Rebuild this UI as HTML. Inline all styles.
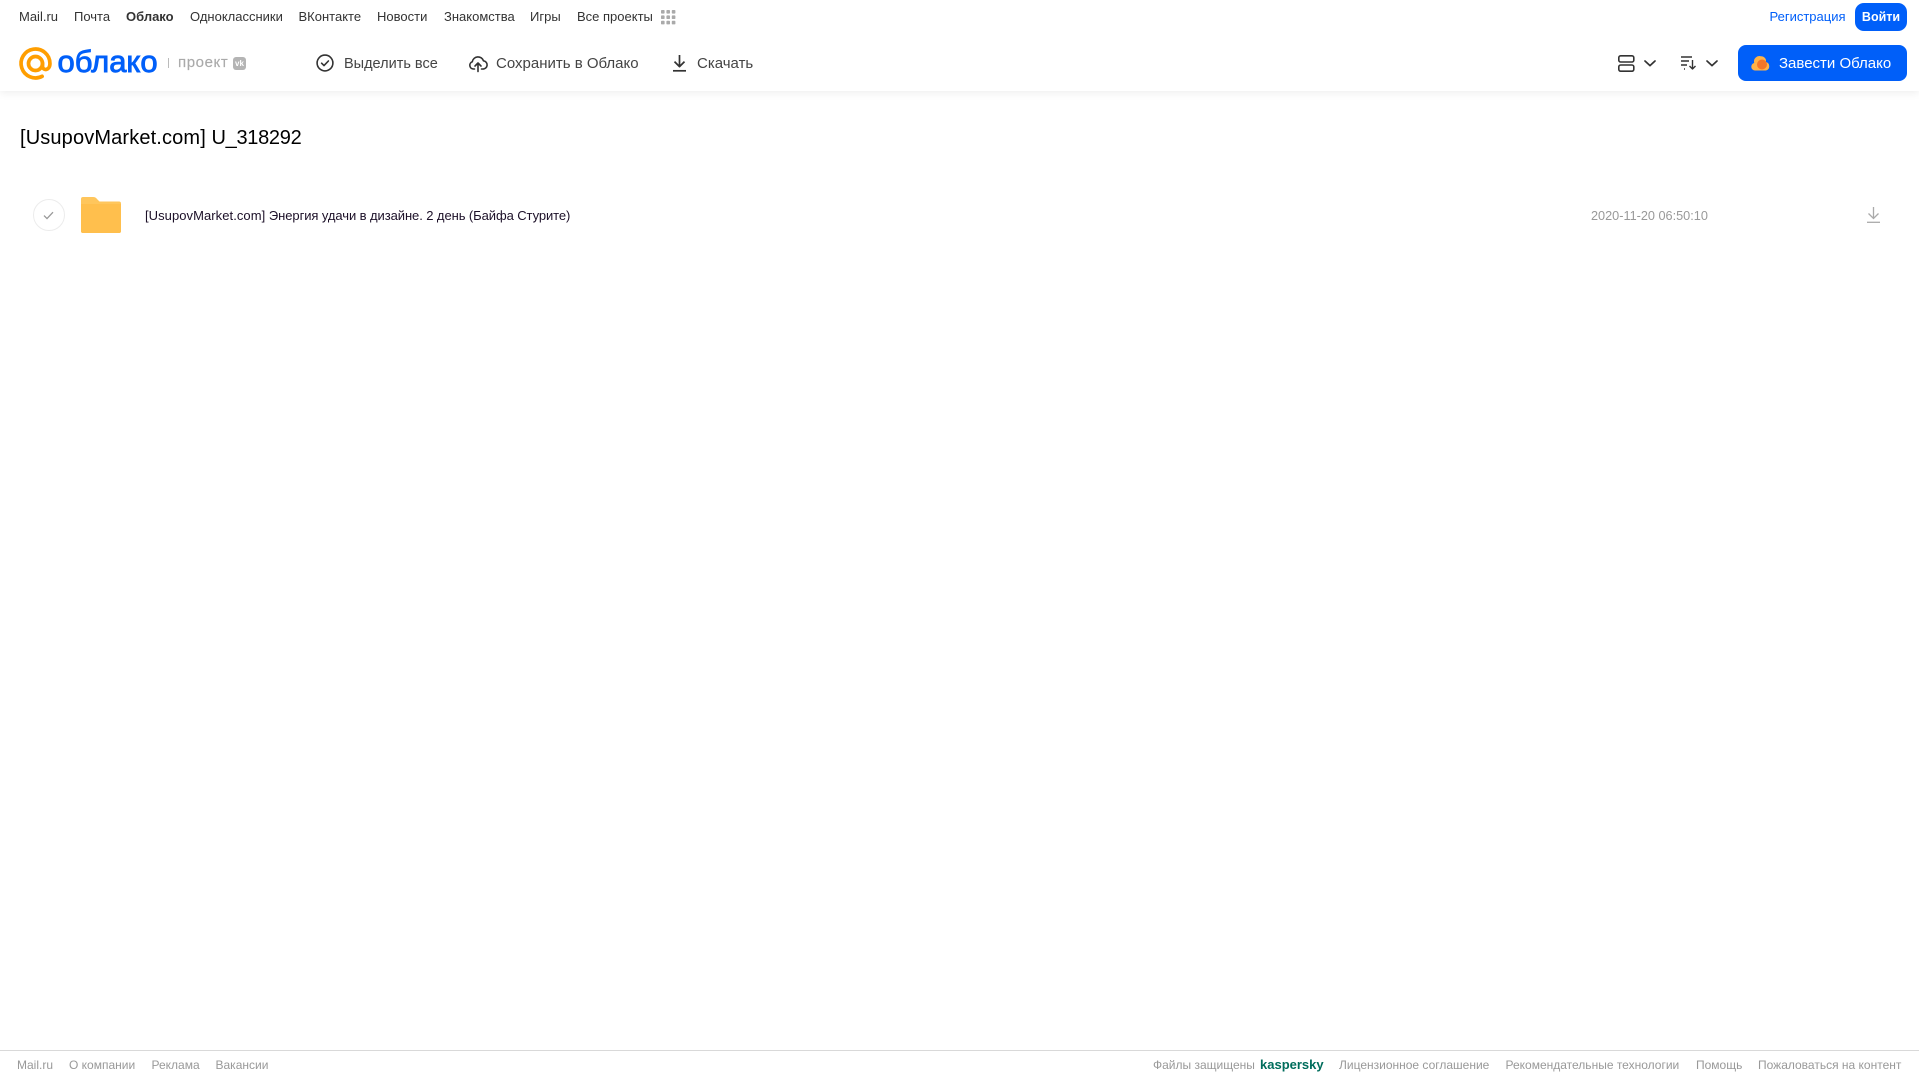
<!DOCTYPE html>
<html lang="ru"><head><meta charset="utf-8"><title>Облако</title>
<style>
html,body{margin:0;padding:0;background:#fff}
body{width:1919px;height:1079px;position:relative;overflow:hidden;font-family:"Liberation Sans",Arial,sans-serif}
a,span.t{position:absolute;white-space:nowrap;text-decoration:none}
svg{position:absolute;display:block;overflow:visible}
.head{position:absolute;left:0;top:0;width:1919px;height:91px;background:#fff;box-shadow:0 2px 8px rgba(0,0,0,.07)}
.n{top:9px;font-size:13px;line-height:15px;color:#333}
.b{top:55px;font-size:15px;line-height:18px;color:#444}
.f{top:1058px;font-size:12px;line-height:14px;color:#999}
</style></head><body>
<div class="head">
<a class="n" style="left:19px">Mail.ru</a>
<a class="n" style="left:74px">Почта</a>
<a class="n" style="left:126px;font-weight:bold">Облако</a>
<a class="n" style="left:190px">Одноклассники</a>
<a class="n" style="left:298.5px">ВКонтакте</a>
<a class="n" style="left:377px">Новости</a>
<a class="n" style="left:444px">Знакомства</a>
<a class="n" style="left:530px">Игры</a>
<a class="n" style="left:577px">Все проекты</a>
<svg style="left:661px;top:10px" width="15" height="15" fill="#aaa"><rect width="3.6" height="3.6" rx=".8"/><rect x="5.4" width="3.6" height="3.6" rx=".8"/><rect x="10.8" width="3.6" height="3.6" rx=".8"/><rect y="5.4" width="3.6" height="3.6" rx=".8"/><rect x="5.4" y="5.4" width="3.6" height="3.6" rx=".8"/><rect x="10.8" y="5.4" width="3.6" height="3.6" rx=".8"/><rect y="10.8" width="3.6" height="3.6" rx=".8"/><rect x="5.4" y="10.8" width="3.6" height="3.6" rx=".8"/><rect x="10.8" y="10.8" width="3.6" height="3.6" rx=".8"/></svg>
<a class="n" style="left:1769.5px;color:#005ff9">Регистрация</a>
<a class="n" style="left:1855px;top:3px;width:52px;height:28px;line-height:28px;background:#005ff9;color:#fff;border-radius:9px;text-align:center;font-weight:bold;font-size:12.5px">Войти</a>

<svg style="left:19px;top:47px" width="33" height="33" viewBox="0 0 32 32" fill="none" stroke="#ff9e00" stroke-width="3.6"><circle cx="16" cy="16" r="6.8"/><path d="M22.8 16v2.6c0 4.6 7.2 4.6 7.2-2.6A14 14 0 1 0 22.4 28.400" stroke-linecap="round"/></svg>
<span class="t" style="left:57.5px;top:44px;font-size:31px;line-height:36px;color:#005ff9;-webkit-text-stroke:.9px #005ff9">облако</span>
<div style="position:absolute;left:168px;top:58px;width:1px;height:10px;background:#bbb"></div>
<span class="t" style="left:178px;top:54px;font-size:15px;line-height:18px;color:#aaa;-webkit-text-stroke:.15px #aaa;letter-spacing:.6px">проект</span>
<span class="t" style="left:233px;top:57px;width:13px;height:13px;border-radius:3px;background:#b4b4b4;color:#fff;font-size:8px;line-height:13px;text-align:center;font-weight:bold">vk</span>

<svg style="left:316px;top:54px" width="18" height="18" viewBox="0 0 18 18" fill="none" stroke="#333" stroke-width="1.6"><circle cx="9" cy="9" r="7.9"/><path d="M5.6 9.2l2.4 2.4 4.4-4.6" stroke-linecap="round" stroke-linejoin="round"/></svg>
<a class="b" style="left:344px;font-size:14.5px">Выделить все</a>
<svg style="left:469px;top:54px" width="18" height="18" viewBox="0 0 18 18" fill="none" stroke="#333" stroke-width="1.6" stroke-linecap="round" stroke-linejoin="round"><path d="M5.500 15H4.500A3.700 3.700 0 0 1 3.300 7.800 5.800 5.800 0 0 1 14.500 6.800 4.100 4.100 0 0 1 13.500 15H12.500"/><path d="M9 17.500V9.500M6 12l3-3 3 3"/></svg>
<a class="b" style="left:496px">Сохранить в Облако</a>
<svg style="left:672px;top:54px" width="15" height="18" viewBox="0 0 15 18" fill="none" stroke="#333" stroke-width="1.7"><path d="M7.500 1v11M2.500 7.600l5 5 5-5" stroke-linejoin="round"/><path d="M1 16.800h13"/></svg>
<a class="b" style="left:697px">Скачать</a>

<svg style="left:1618px;top:55px" width="17" height="17" viewBox="0 0 17 17" fill="none" stroke="#333" stroke-width="1.6"><rect x=".8" y=".8" width="15" height="6.2" rx="1.8"/><rect x=".8" y="10" width="15" height="6.2" rx="1.8"/></svg>
<svg style="left:1644px;top:60px" width="12" height="7" viewBox="0 0 12 7" fill="none" stroke="#333" stroke-width="1.7" stroke-linecap="round" stroke-linejoin="round"><path d="M1 1l5 4.600L11 1"/></svg>
<svg style="left:1681px;top:56px" width="16" height="14" viewBox="0 0 16 14" fill="none" stroke="#333" stroke-width="1.4"><path d="M0 1h11M0 5h8M0 9h6M3 13h1"/><path d="M11.500 4v9M8.500 10l3 3 3-3" stroke-linejoin="round"/></svg>
<svg style="left:1706px;top:60px" width="12" height="7" viewBox="0 0 12 7" fill="none" stroke="#333" stroke-width="1.7" stroke-linecap="round" stroke-linejoin="round"><path d="M1 1l5 4.600L11 1"/></svg>

<div style="position:absolute;left:1738px;top:45px;width:169px;height:36px;background:#005ff9;border-radius:8px"></div>
<svg style="left:1751px;top:54px" width="19" height="17" viewBox="0 0 19 17"><path d="M4 16.500A3.800 3.800 0 0 1 3.200 9 5.500 5.500 0 0 1 10 2.200 5 5 0 0 1 15 8a4.400 4.400 0 0 1 0 8.500z" fill="#ffb347"/><circle cx="11" cy="10.500" r="5" fill="#f4762a"/></svg>
<a class="b" style="left:1779px;color:#fff">Завести Облако</a>
</div>

<span class="t" style="left:20px;top:126px;font-size:20px;line-height:24px;color:#000"><span style="letter-spacing:.14px">[UsupovMarket.com]</span> <span style="letter-spacing:-.3px">U_318292</span></span>

<div style="position:absolute;left:33px;top:199px;width:30px;height:30px;border:1px solid #ececec;border-radius:50%"></div>
<svg style="left:43px;top:211px" width="11" height="9" viewBox="0 0 11 9" fill="none" stroke="#999" stroke-width="1.3"><path d="M1 4.600l3 3 6-6.400"/></svg>
<svg style="left:81px;top:197px" width="40" height="36" viewBox="0 0 40 36"><path d="M2 0h10c2 0 3 .8 4 2l2.500 2.500H38a2 2 0 0 1 2 2V34a2 2 0 0 1-2 2H2a2 2 0 0 1-2-2V2a2 2 0 0 1 2-2z" fill="#ffc65c"/><path d="M0 7h40v27a2 2 0 0 1-2 2H2a2 2 0 0 1-2-2z" fill="#ffbf4d"/></svg>
<span class="t" style="left:145px;top:208px;font-size:13px;line-height:15px;color:#1c1028"><span style="letter-spacing:.06px">[UsupovMarket.com]</span> <span style="letter-spacing:-.08px">Энергия удачи в дизайне. 2 день (Байфа Стурите)</span></span>
<span class="t" style="left:1591px;top:208px;font-size:12.7px;line-height:16px;color:#999">2020-11-20 06:50:10</span>
<svg style="left:1867px;top:207px" width="13" height="16" viewBox="0 0 13 16" fill="none" stroke="#aaa" stroke-width="1.3"><path d="M6.500 0v11M1.500 6.500l5 5 5-5"/><path d="M0 15.300h13"/></svg>

<div style="position:absolute;left:0;top:1050px;width:1919px;height:1px;background:#d9d9d9"></div>
<a class="f" style="left:17px">Mail.ru</a>
<a class="f" style="left:69px">О компании</a>
<a class="f" style="left:151.5px">Реклама</a>
<a class="f" style="left:215.5px">Вакансии</a>
<a class="f" style="left:1153px">Файлы защищены</a>
<a class="f" style="left:1260px;color:#006d5c;font-weight:bold;font-size:13px">kaspersky</a>
<a class="f" style="left:1339px">Лицензионное соглашение</a>
<a class="f" style="left:1505.5px">Рекомендательные технологии</a>
<a class="f" style="left:1696px">Помощь</a>
<a class="f" style="left:1758px">Пожаловаться на контент</a>
</body></html>
